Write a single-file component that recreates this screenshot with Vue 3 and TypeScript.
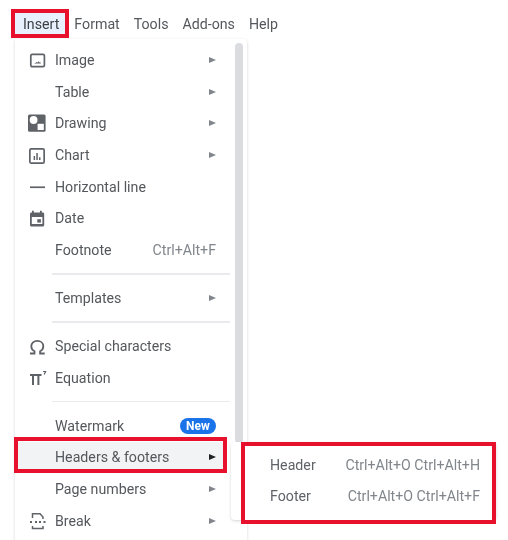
<script setup lang="ts">
type Row =
  | { kind: 'sep' }
  | { kind: 'item'; label: string; icon?: string; arrow?: boolean; shortcut?: string; badge?: string; active?: boolean }

const tabs = ['Insert', 'Format', 'Tools', 'Add-ons', 'Help']

const rows: Row[] = [
  { kind: 'item', label: 'Image', icon: 'image', arrow: true },
  { kind: 'item', label: 'Table', arrow: true },
  { kind: 'item', label: 'Drawing', icon: 'drawing', arrow: true },
  { kind: 'item', label: 'Chart', icon: 'chart', arrow: true },
  { kind: 'item', label: 'Horizontal line', icon: 'line' },
  { kind: 'item', label: 'Date', icon: 'date' },
  { kind: 'item', label: 'Footnote', shortcut: 'Ctrl+Alt+F' },
  { kind: 'sep' },
  { kind: 'item', label: 'Templates', arrow: true },
  { kind: 'sep' },
  { kind: 'item', label: 'Special characters', icon: 'omega' },
  { kind: 'item', label: 'Equation', icon: 'pi' },
  { kind: 'sep' },
  { kind: 'item', label: 'Watermark', badge: 'New' },
  { kind: 'item', label: 'Headers & footers', arrow: true, active: true },
  { kind: 'item', label: 'Page numbers', arrow: true },
  { kind: 'item', label: 'Break', icon: 'break', arrow: true },
]

const subRows = [
  { label: 'Header', shortcut: 'Ctrl+Alt+O Ctrl+Alt+H' },
  { label: 'Footer', shortcut: 'Ctrl+Alt+O Ctrl+Alt+F' },
]
</script>

<template>
  <div class="page">
    <div class="bar">
      <span v-for="(t, i) in tabs" :key="t" class="tab" :class="{ first: i === 0 }">{{ t }}</span>
    </div>

    <div class="stage">
      <div class="menu">
        <div class="thumb"></div>
        <template v-for="(r, i) in rows" :key="i">
          <div v-if="r.kind === 'sep'" class="sep"><i></i></div>
          <div v-else class="row" :class="{ active: r.active }">
            <span class="ico">
              <svg v-if="r.icon === 'image'" width="18" height="18" viewBox="0 0 18 18">
                <rect x="2.800" y="3.300" width="13.600" height="12.400" rx="1.400" fill="none" stroke="#5f6368" stroke-width="1.700" />
                <path d="M6 12.600h6.800v-1.100h-1.200l-1-1.200-1.300 1.400-.8-.8-1.200 1z" fill="#5f6368" />
              </svg>
              <svg v-else-if="r.icon === 'drawing'" width="18" height="18" viewBox="0 0 18 18">
                <rect x="0" y="0.400" width="17.600" height="17.400" rx="1.600" fill="#5f6368" />
                <circle cx="5.600" cy="6" r="3.900" fill="#fff" />
                <rect x="9.600" y="9.800" width="6.200" height="6.200" fill="#fff" />
              </svg>
              <svg v-else-if="r.icon === 'chart'" width="18" height="18" viewBox="0 0 18 18">
                <rect x="1.850" y="2.850" width="14.300" height="14.300" rx="1.400" fill="none" stroke="#5f6368" stroke-width="1.700" />
                <path d="M5.600 10h1.500v4H5.600zM8.300 7h1.500v7H8.300zM11 11.200h1.500V14H11z" fill="#5f6368" />
              </svg>
              <svg v-else-if="r.icon === 'line'" width="18" height="18" viewBox="0 0 18 18">
                <rect x="2" y="8.400" width="15" height="1.700" fill="#5f6368" />
              </svg>
              <svg v-else-if="r.icon === 'date'" width="18" height="18" viewBox="0 0 18 18">
                <path d="M4 1.800h1.800v1.600h6.200V1.800h1.800v1.600h.9c.9 0 1.500.7 1.500 1.500v11.100c0 .9-.7 1.500-1.500 1.500H3.500c-.9 0-1.500-.7-1.500-1.500V4.900c0-.9.700-1.500 1.500-1.500H4zM3.800 8v7.100h10.600V8z" fill="#5f6368" />
                <rect x="9.300" y="10.200" width="3.600" height="3.400" fill="#5f6368" />
              </svg>
              <svg v-else-if="r.icon === 'omega'" width="18" height="18" viewBox="0 0 18 18">
                <path d="M2 16.500h4.500v-2.200C4.500 13.300 3.300 11.300 3.300 9.200 3.300 6.100 5.900 3.900 9.300 3.900s6 2.200 6 5.300c0 2.100-1.200 4.100-3.200 5.100v2.200h4.600" fill="none" stroke="#5f6368" stroke-width="1.800" />
              </svg>
              <svg v-else-if="r.icon === 'pi'" width="19" height="18" viewBox="0 0 19 18">
                <path d="M2 6h11.500M5 6v10M10.400 6v10" fill="none" stroke="#5f6368" stroke-width="2" />
                <path d="M15 2.500h2.600l-1.400 3" fill="none" stroke="#5f6368" stroke-width="1.200" />
              </svg>
              <svg v-else-if="r.icon === 'break'" width="18" height="18" viewBox="0 0 18 18">
                <path d="M4.500 6V1.800h7.500l3 3.200V7M4.500 14v2.600h10.500V14" fill="none" stroke="#5f6368" stroke-width="1.500" />
                <path d="M2 10h2M7 10h2M11 10h2M15.500 10h2" stroke="#5f6368" stroke-width="1.800" />
              </svg>
            </span>
            <span class="label">{{ r.label }}</span>
            <span v-if="r.badge" class="badge">{{ r.badge }}</span>
            <span v-if="r.shortcut" class="shortcut">{{ r.shortcut }}</span>
            <span v-if="r.arrow" class="arrow"></span>
          </div>
        </template>
      </div>

      <div class="submenu">
        <div v-for="s in subRows" :key="s.label" class="subrow">
          <span class="sublabel">{{ s.label }}</span>
          <span class="subkey">{{ s.shortcut }}</span>
        </div>
      </div>
    </div>
  </div>
</template>

<style scoped>
.page {
  position: relative;
  width: 508px;
  height: 540px;
  overflow: hidden;
  background: #fff;
  font-family: Roboto, "Liberation Sans", sans-serif;
  font-size: 14.2px;
  color: #54585c;
  filter: blur(0.6px);
}
.bar {
  display: flex;
  align-items: flex-start;
  gap: 14px;
  height: 39px;
  box-sizing: border-box;
  padding: 13px 0 0 15px;
}
.tab {
  height: 21px;
  line-height: 22px;
  white-space: nowrap;
}
.tab.first {
  padding: 0 6px 0 8px;
  margin-right: -5px;
  background: #e8f0fe;
  color: #3c4043;
  outline: 4px solid #e8112d;
}
.stage {
  position: relative;
}
.menu {
  position: relative;
  width: 232px;
  height: 520px;
  margin-left: 15px;
  padding-top: 5.500px;
  box-sizing: border-box;
  border-radius: 0 4px 0 0;
  background: #fff;
  box-shadow: 0 1px 3px rgba(60, 64, 67, 0.22);
}
.thumb {
  position: absolute;
  left: 220px;
  top: 4px;
  width: 8px;
  height: 400px;
  border-radius: 4px;
  background: #dadce0;
}
.row {
  position: relative;
  display: flex;
  align-items: center;
  height: 31.600px;
  width: 212px;
  box-sizing: border-box;
  padding: 0 11px 0 13px;
}
.row.active {
  background: #f1f3f4;
}
.row.active::after {
  content: "";
  position: absolute;
  left: -1px;
  right: 0;
  top: -5px;
  height: 36px;
  box-sizing: border-box;
  border: 4px solid #e8112d;
}
.ico {
  display: flex;
  align-items: center;
  width: 27px;
  flex: none;
}
.label {
  flex: 1;
  white-space: nowrap;
}
.shortcut {
  color: #80868b;
  white-space: nowrap;
}
.arrow {
  width: 0;
  height: 0;
  border-left: 7px solid #80868b;
  border-top: 3.500px solid transparent;
  border-bottom: 3.500px solid transparent;
}
.row.active .arrow {
  border-left-color: #202124;
}
.badge {
  width: 36px;
  height: 16px;
  line-height: 16px;
  border-radius: 8px;
  text-align: center;
  background: #1a73e8;
  color: #fff;
  font-size: 12px;
  font-weight: 700;
}
.sep {
  display: flex;
  align-items: center;
  height: 16.500px;
  width: 215px;
  padding-left: 37px;
  box-sizing: border-box;
}
.sep i {
  flex: 1;
  height: 1.500px;
  background: #e8eaed;
}
.submenu {
  position: absolute;
  left: 231px;
  top: 403px;
  width: 265px;
  height: 78px;
  box-sizing: border-box;
  background: #fff;
  border-radius: 4px;
  box-shadow: 0 1px 3px rgba(60, 64, 67, 0.22);
  padding: 7px 0 0 10px;
  display: flex;
  flex-direction: column;
}
.submenu::after {
  content: "";
  position: absolute;
  left: 10px;
  right: 0;
  top: 0;
  bottom: -4px;
  border: 4px solid #e8112d;
}
.subrow {
  display: flex;
  align-items: center;
  justify-content: space-between;
  height: 31.600px;
  padding: 0 16px 0 29px;
}
.sublabel {
  color: #5f6368;
}
.subkey {
  color: #80868b;
  white-space: nowrap;
}
</style>
